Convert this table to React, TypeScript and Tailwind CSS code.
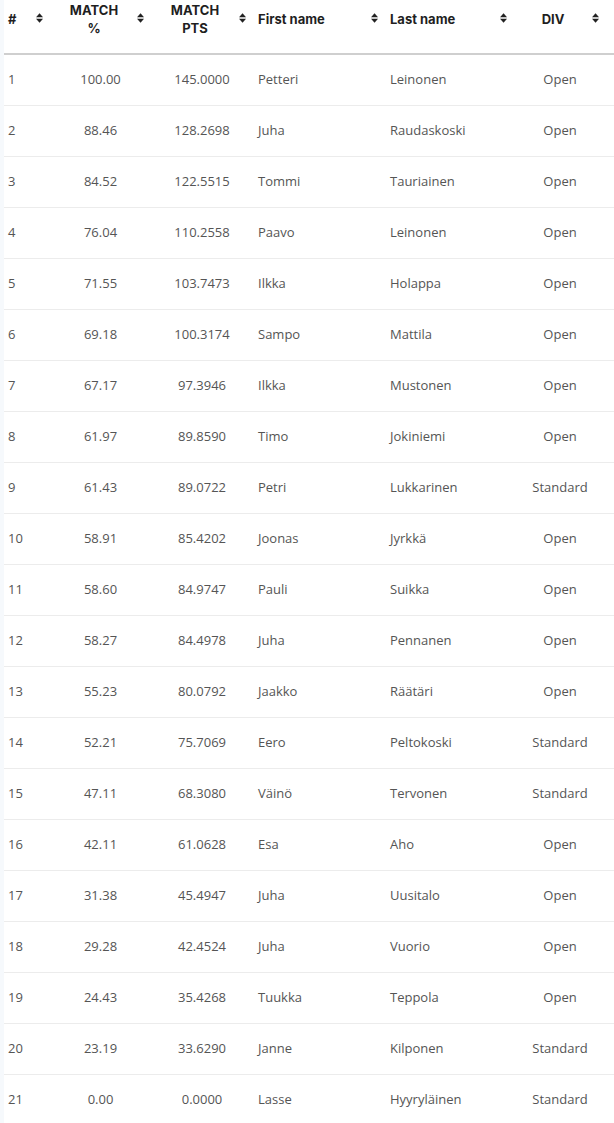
import React from "react";

type Row = [string, string, string, string, string];

const rows: Row[] = [
  ["100.00", "145.0000", "Petteri", "Leinonen", "Open"],
  ["88.46", "128.2698", "Juha", "Raudaskoski", "Open"],
  ["84.52", "122.5515", "Tommi", "Tauriainen", "Open"],
  ["76.04", "110.2558", "Paavo", "Leinonen", "Open"],
  ["71.55", "103.7473", "Ilkka", "Holappa", "Open"],
  ["69.18", "100.3174", "Sampo", "Mattila", "Open"],
  ["67.17", "97.3946", "Ilkka", "Mustonen", "Open"],
  ["61.97", "89.8590", "Timo", "Jokiniemi", "Open"],
  ["61.43", "89.0722", "Petri", "Lukkarinen", "Standard"],
  ["58.91", "85.4202", "Joonas", "Jyrkkä", "Open"],
  ["58.60", "84.9747", "Pauli", "Suikka", "Open"],
  ["58.27", "84.4978", "Juha", "Pennanen", "Open"],
  ["55.23", "80.0792", "Jaakko", "Räätäri", "Open"],
  ["52.21", "75.7069", "Eero", "Peltokoski", "Standard"],
  ["47.11", "68.3080", "Väinö", "Tervonen", "Standard"],
  ["42.11", "61.0628", "Esa", "Aho", "Open"],
  ["31.38", "45.4947", "Juha", "Uusitalo", "Open"],
  ["29.28", "42.4524", "Juha", "Vuorio", "Open"],
  ["24.43", "35.4268", "Tuukka", "Teppola", "Open"],
  ["23.19", "33.6290", "Janne", "Kilponen", "Standard"],
  ["0.00", "0.0000", "Lasse", "Hyyryläinen", "Standard"],
];

const SortIcon = ({ className }: { className: string }) => (
  <svg
    width="7"
    height="10"
    viewBox="0 0 7 10"
    className={`absolute top-[13px] ${className}`}
  >
    <path d="M0 4.2 L3.5 0.2 L7 4.2 Z" fill="#222" />
    <path d="M0 5.8 L7 5.8 L3.5 9.8 Z" fill="#222" />
  </svg>
);

const Th = ({
  children,
  className,
  icon,
}: {
  children: React.ReactNode;
  className: string;
  icon: string;
}) => (
  <th
    className={`relative h-[54px] pb-[16px] align-middle text-[13px] font-bold leading-[18px] text-[#1f1f1f] ${className}`}
  >
    {children}
    <SortIcon className={icon} />
  </th>
);

export default function App() {
  return (
    <div
      className="min-h-screen bg-white pl-[4px]"
      style={{ fontFamily: "'Open Sans', 'Liberation Sans', sans-serif" }}
    >
      <div className="fixed left-0 top-0 h-full w-[4px] bg-[#f6f9fc]" />
      <table className="w-[610px] table-fixed border-collapse">
        <colgroup>
          <col className="w-[46px]" />
          <col className="w-[101px]" />
          <col className="w-[102px]" />
          <col className="w-[132px]" />
          <col className="w-[129px]" />
          <col className="w-[100px]" />
        </colgroup>
        <thead style={{ fontFamily: "Inter, 'Noto Sans', sans-serif" }}>
          <tr className="border-b-[2px] border-[#cfcfcf]">
            <Th className="pl-[4px] text-left" icon="right-[7px]">
              #
            </Th>
            <Th className="pl-[5px] pr-[18px] text-center" icon="right-[7px]">
              MATCH
              <br />%
            </Th>
            <Th className="pl-[5px] pr-[19px] text-center" icon="right-[7px]">
              MATCH
              <br />
              PTS
            </Th>
            <Th className="pl-[5px] text-left" icon="right-[7px]">
              First name
            </Th>
            <Th className="pl-[5px] text-left" icon="right-[7px]">
              Last name
            </Th>
            <Th className="pl-[5px] pr-[27px] text-center" icon="right-[15px]">
              DIV
            </Th>
          </tr>
        </thead>
        <tbody className="text-[13px] text-[#555]">
          {rows.map((r, i) => (
            <tr key={i} className="h-[51px] border-b border-[#ececec] last:border-b-0">
              <td className="pl-[4px] text-left">{i + 1}</td>
              <td className="px-[5px] text-center">{r[0]}</td>
              <td className="px-[5px] text-center">{r[1]}</td>
              <td className="px-[5px] text-left">{r[2]}</td>
              <td className="px-[5px] text-left">{r[3]}</td>
              <td className="pl-[5px] pr-[13px] text-center">{r[4]}</td>
            </tr>
          ))}
        </tbody>
      </table>
    </div>
  );
}
